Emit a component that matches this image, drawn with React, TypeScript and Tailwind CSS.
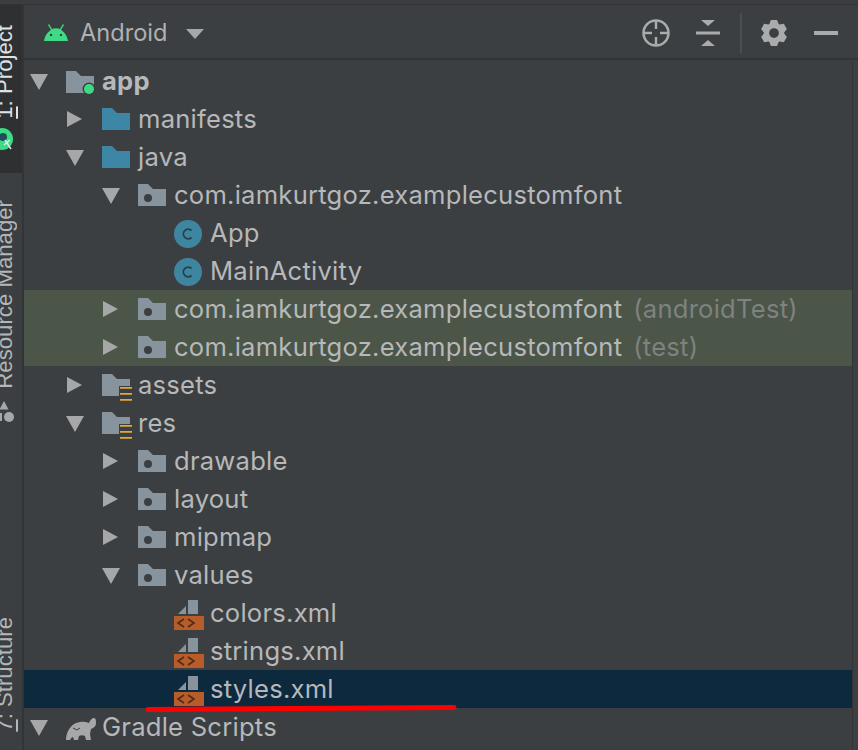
import React from 'react';

type Icon = 'module' | 'source' | 'package' | 'resources' | 'class' | 'xml' | 'gradle';

interface TreeRow {
  level: number;
  label: string;
  icon: Icon;
  open?: boolean;
  leaf?: boolean;
  bold?: boolean;
  hint?: string;
  tint?: 'test' | 'selected';
}

const rows: TreeRow[] = [
  { level: 0, label: 'app', icon: 'module', open: true, bold: true },
  { level: 1, label: 'manifests', icon: 'source' },
  { level: 1, label: 'java', icon: 'source', open: true },
  { level: 2, label: 'com.iamkurtgoz.examplecustomfont', icon: 'package', open: true },
  { level: 3, label: 'App', icon: 'class', leaf: true },
  { level: 3, label: 'MainActivity', icon: 'class', leaf: true },
  { level: 2, label: 'com.iamkurtgoz.examplecustomfont', icon: 'package', hint: '(androidTest)', tint: 'test' },
  { level: 2, label: 'com.iamkurtgoz.examplecustomfont', icon: 'package', hint: '(test)', tint: 'test' },
  { level: 1, label: 'assets', icon: 'resources' },
  { level: 1, label: 'res', icon: 'resources', open: true },
  { level: 2, label: 'drawable', icon: 'package' },
  { level: 2, label: 'layout', icon: 'package' },
  { level: 2, label: 'mipmap', icon: 'package' },
  { level: 2, label: 'values', icon: 'package', open: true },
  { level: 3, label: 'colors.xml', icon: 'xml', leaf: true },
  { level: 3, label: 'strings.xml', icon: 'xml', leaf: true },
  { level: 3, label: 'styles.xml', icon: 'xml', leaf: true, tint: 'selected' },
  { level: 0, label: 'Gradle Scripts', icon: 'gradle', open: true },
];

const FOLDER = 'M0 0h10l5 5h13v17H0z';

// six tooth gear, same shape as the tool window settings icon
const gearPath = () => {
  const pt = (r: number, deg: number) => {
    const a = (deg * Math.PI) / 180;
    return `${(12 + r * Math.cos(a)).toFixed(2)} ${(12 + r * Math.sin(a)).toFixed(2)}`;
  };
  const teeth = [30, 90, 150, 210, 270, 330].map(
    (t) => `L${pt(9.4, t - 27)}L${pt(12.4, t - 13)}L${pt(12.4, t + 13)}L${pt(9.4, t + 27)}`,
  );
  return `M${teeth.join('').slice(1)}ZM12 7.500a4.500 4.500 0 1 0 0 9 4.500 4.500 0 0 0 0-9Z`;
};

const Arrow = ({ open }: { open?: boolean }) => (
  <svg width="18" height="18" viewBox="0 0 18 18" className="fill-[#a5a7a9]">
    {open ? <path d="M0 2h18L9 18z" /> : <path d="M1 1l15 8-15 8z" />}
  </svg>
);

const TreeIcon = ({ icon }: { icon: Icon }) => {
  if (icon === 'class') {
    return (
      <svg width="28" height="28" viewBox="0 0 28 28" className="mt-[2px]">
        <circle cx="14" cy="14" r="14" fill="#3e86a0" />
        <path d="M17.500 10.500a4.800 4.800 0 1 0 0 7" fill="none" stroke="#24404e" strokeWidth="1.8" />
      </svg>
    );
  }
  if (icon === 'xml') {
    return (
      <svg width="30" height="30" viewBox="0 0 30 30" className="mt-[4px]">
        <path d="M14 0h10v14H14zM4 14l8-8v8z" fill="#87949e" />
        <path d="M0 16h30v14H0z" fill="#b85c2a" />
        <path d="M10 19l-6 4 6 4M14 19l6 4-6 4" fill="none" stroke="#4f2c18" strokeWidth="1.6" />
      </svg>
    );
  }
  if (icon === 'gradle') {
    return (
      <svg width="30" height="22" viewBox="0 0 30 22" className="mt-[3px] fill-[#a5a7a9]">
        <path d="M0 22C0 14 5 5 14 4c3-.5 6 0 9 1 1-3 3-5 5-5s2 3 2 5-1 4-3 5l-2 1-1 5 1 6h-5l-1-4c-2-1-4-1-6 0l-1 4H8l-1-3c-1 0-2 1-3 3z" />
        <path d="M7 10l4 2 3-2" fill="none" stroke="#3c3f41" strokeWidth="1" />
      </svg>
    );
  }
  if (icon === 'module') {
    return (
      <svg width="30" height="27" viewBox="0 0 30 27" className="mt-[6px]">
        <path d={FOLDER} fill="#87949e" />
        <circle cx="23" cy="18" r="6.500" fill="#3c3f41" />
        <circle cx="23" cy="18" r="5" fill="#3ddc84" />
      </svg>
    );
  }
  if (icon === 'source') {
    return (
      <svg width="28" height="22" viewBox="0 0 28 22">
        <path d={FOLDER} fill="#3e86a5" />
      </svg>
    );
  }
  if (icon === 'package') {
    return (
      <svg width="28" height="22" viewBox="0 0 28 22">
        <path d={FOLDER} fill="#87949e" />
        <circle cx="10" cy="14" r="4" fill="#3c3f41" />
      </svg>
    );
  }
  return (
    <svg width="31" height="28" viewBox="0 0 31 28" className="mt-[6px]">
      <path d={FOLDER} fill="#87949e" />
      <path d="M17 12h14v16H17z" fill="#3c3f41" />
      <path d="M18 13h12v1.800H18zM18 19h12v1.800H18zM18 25h12v1.800H18z" fill="#e3a83a" />
    </svg>
  );
};

const Row = ({ row }: { row: TreeRow }) => {
  const tint =
    row.tint === 'test' ? 'bg-[#4b5548]' : row.tint === 'selected' ? 'bg-[#0d293e]' : '';
  return (
    <div
      className={`flex h-[38px] items-center tracking-[0.23px] ${tint}`}
      style={{ paddingLeft: 6 + row.level * 36 }}
    >
      <div className="flex w-[36px] shrink-0 items-center">
        {!row.leaf && <Arrow open={row.open} />}
      </div>
      <div className="flex w-[36px] shrink-0 items-center">
        <TreeIcon icon={row.icon} />
      </div>
      <span className={`whitespace-nowrap ${row.bold ? 'font-bold' : ''}`}>{row.label}</span>
      {row.hint && <span className="ml-[11px] whitespace-nowrap text-[#7e8280]">{row.hint}</span>}
    </div>
  );
};

const SideLabel = ({ children, className }: { children: React.ReactNode; className?: string }) => (
  <span
    className={`-ml-[6px] rotate-180 whitespace-nowrap font-['Liberation_Sans',sans-serif] text-[22.2px] leading-[22px] [writing-mode:vertical-rl] ${className ?? ''}`}
  >
    {children}
  </span>
);

export default function App() {
  return (
    <div className="relative flex h-[750px] w-[858px] flex-col overflow-hidden bg-[#3c3f41] font-['Inter',sans-serif] text-[25.6px] text-[#b6b8ba]">
      <div className="h-[5px] shrink-0 border-b border-[#323436] bg-[#3b3d40]" />
      <div className="flex min-h-0 flex-1">
        <aside className="flex w-[24px] shrink-0 flex-col overflow-hidden border-r-2 border-[#323436] bg-[#3c3f41]">
          <div className="flex h-[168px] shrink-0 flex-col items-start overflow-hidden bg-[#2f3032] pt-[20px]">
            <SideLabel className="text-[#dfe1e3]">
              <span className="underline">1</span>: Project
            </SideLabel>
            <svg width="14" height="24" viewBox="0 0 14 24" className="mt-[9px]">
              <circle cx="2" cy="11" r="11" fill="#3ddc84" />
              <circle cx="3" cy="9" r="4" fill="#1f4d5c" />
              <path d="M5 12l6 9M10 12l-6 5" stroke="#dbe8ee" strokeWidth="1.500" fill="none" />
            </svg>
          </div>
          <div className="mt-[27px] flex flex-col items-start">
            <SideLabel className="text-[#b4b6b8]">Resource Manager</SideLabel>
            <svg width="22" height="24" viewBox="0 0 22 24" className="mt-[12px] fill-[#a5a7a9]">
              <path d="M4 0l4.500 8.500H-.5zM0 12h2v8H0z" />
              <circle cx="9" cy="16" r="5" />
            </svg>
          </div>
          <div className="mt-auto flex flex-col items-start pb-[18px]">
            <SideLabel className="text-[#b4b6b8]">
              <span className="underline">7</span>: Structure
            </SideLabel>
          </div>
        </aside>
        <main className="flex min-w-0 flex-1 flex-col">
          <header className="flex h-[55px] shrink-0 items-center border-b-2 border-[#323436] pl-[20px] pr-[20px] pt-[3px]">
            <svg width="24" height="18" viewBox="0 0 24 18" className="fill-[#3ddc84]">
              <path d="M0 17C1 11 4 8 7 6L4 1l1-1 3 5c3-1 5-1 8 0l3-5 1 1-3 5c3 2 6 5 7 11z" />
              <circle cx="7" cy="11" r="1.200" fill="#3c3f41" />
              <circle cx="17" cy="11" r="1.200" fill="#3c3f41" />
            </svg>
            <span className="ml-[12px] text-[23.6px] text-[#afb1b3]">Android</span>
            <svg width="18" height="10" viewBox="0 0 18 10" className="ml-[19px] mt-[2px] fill-[#a5a7a9]">
              <path d="M0 0h18L9 10z" />
            </svg>
            <div className="ml-auto flex items-center">
              <svg width="28" height="28" viewBox="0 0 28 28" fill="none" stroke="#a9abad" strokeWidth="2.500">
                <circle cx="14" cy="14" r="12.500" />
                <path d="M14 1v9M14 18v9M1 14h9M18 14h9" />
              </svg>
              <svg width="24" height="26" viewBox="0 0 24 26" className="ml-[26px] fill-[#a9abad]">
                <path d="M5 0h14l-7 6zM0 11.500h24v3H0zM12 20l7 6H5z" />
              </svg>
              <div className="ml-[20px] h-[40px] w-[2px] bg-[#4c4f51]" />
              <svg width="26" height="26" viewBox="0 0 24 24" className="ml-[19px] fill-[#a9abad]">
                <path fillRule="evenodd" d={gearPath()} />
              </svg>
              <div className="ml-[27px] h-[4px] w-[24px] bg-[#a9abad]" />
            </div>
          </header>
          <div className="flex min-h-0 flex-1">
            <div className="mt-[2px] min-w-0 flex-1 border-r border-[#323436]">
              {rows.map((row, i) => (
                <Row key={i} row={row} />
              ))}
            </div>
            <div className="w-[5px] shrink-0" />
          </div>
        </main>
      </div>
      <svg width="858" height="750" className="pointer-events-none absolute left-0 top-0">
        <path d="M148 709.500L454 707.500" stroke="#fe0000" strokeWidth="5" strokeLinecap="round" />
      </svg>
    </div>
  );
}
